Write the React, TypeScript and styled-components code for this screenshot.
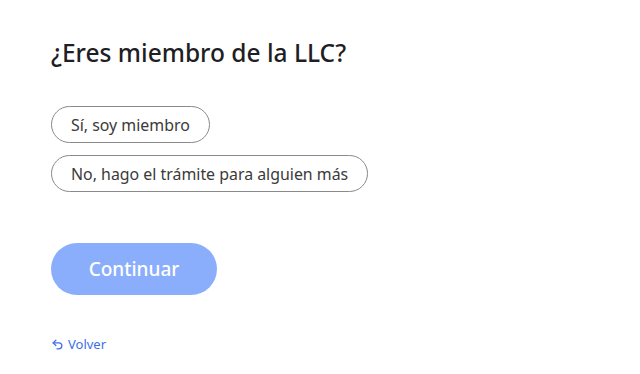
import styled, { createGlobalStyle } from "styled-components";

const GlobalStyle = createGlobalStyle`
  body {
    margin: 0;
    background: #ffffff;
    font-family: "Noto Sans", "Open Sans", sans-serif;
  }
`;

const Page = styled.div`
  display: flex;
  flex-direction: column;
  align-items: flex-start;
  padding: 33px 51px 0;
`;

const Title = styled.h1`
  margin: 0;
  font-size: 24.5px;
  font-weight: 500;
  color: #1e1e24;
  line-height: 40px;
`;

const Options = styled.div`
  display: flex;
  flex-direction: column;
  align-items: flex-start;
  gap: 12px;
  margin-top: 33px;
`;

const Option = styled.button<{ $selected?: boolean }>`
  height: 37px;
  padding: 0 19px;
  border-radius: 19px;
  border: 1px solid ${(p) => (p.$selected ? "#5b8def" : "#8a8a8a")};
  background: #fff;
  color: #3a3a3a;
  font-family: inherit;
  font-size: 15.9px;
  cursor: pointer;
`;

const Continue = styled.button`
  margin-top: 51px;
  width: 166px;
  height: 52px;
  border: none;
  border-radius: 26px;
  background: #8aaefc;
  color: #fff;
  font-family: inherit;
  font-size: 19px;
  font-weight: 500;
  cursor: pointer;
`;

const Back = styled.a`
  display: flex;
  align-items: center;
  gap: 4px;
  margin-top: 40px;
  color: #3d6fe8;
  font-size: 13px;
  text-decoration: none;
  cursor: pointer;
`;

export default function App() {
  return (
    <>
      <GlobalStyle />
      <Page>
        <Title>¿Eres miembro de la LLC?</Title>
        <Options>
          <Option>Sí, soy miembro</Option>
          <Option>No, hago el trámite para alguien más</Option>
        </Options>
        <Continue>Continuar</Continue>
        <Back>
          <svg width="13" height="13" viewBox="0 0 24 24" fill="none" stroke="currentColor" strokeWidth="2.4" strokeLinecap="round" strokeLinejoin="round">
            <path d="M9 14 4 9l5-5" />
            <path d="M4 9h10.5a5.5 5.5 0 0 1 0 11H11" />
          </svg>
          Volver
        </Back>
      </Page>
    </>
  );
}
